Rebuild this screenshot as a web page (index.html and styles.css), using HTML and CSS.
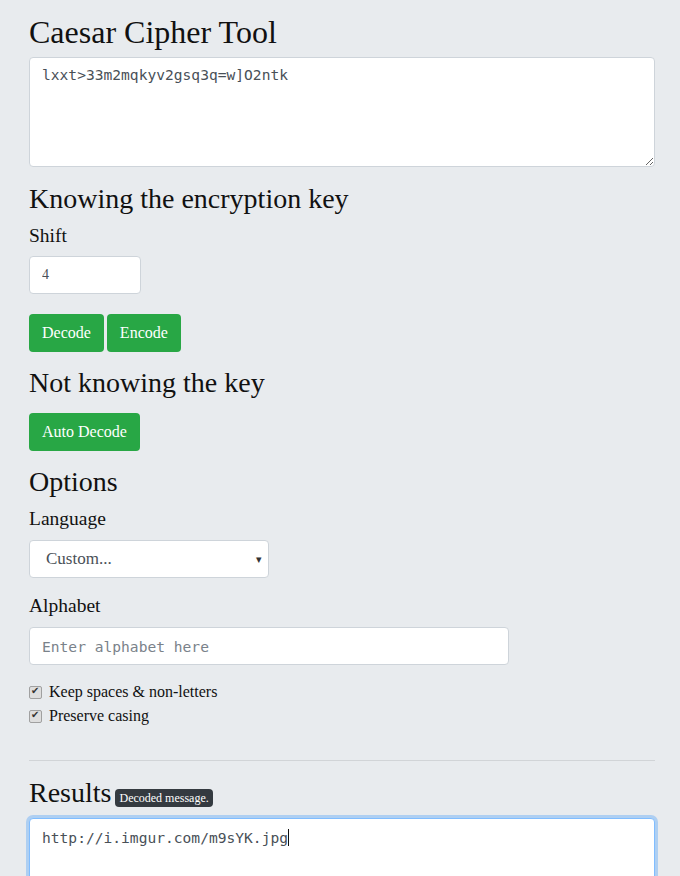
FILE: index.html
```html
<!DOCTYPE html>
<html lang="en">
<head>
  <meta charset="UTF-8" />
  <title>Caesar Cipher Tool</title>
  <link rel="stylesheet" href="styles.css">
</head>
<body>
  <div class="container">
    <h1>Caesar Cipher Tool</h1>
    <textarea id="input" class="campo area" spellcheck="false">lxxt>33m2mqkyv2gsq3q=w]O2ntk</textarea>

    <h2>Knowing the encryption key</h2>
    <label for="shift" class="etiqueta">Shift</label>
    <input type="text" id="shift" class="campo shift" value="4">
    <div class="botones">
      <button class="btn">Decode</button>
      <button class="btn">Encode</button>
    </div>

    <h2>Not knowing the key</h2>
    <div class="botones solo">
      <button class="btn">Auto Decode</button>
    </div>

    <h2>Options</h2>
    <label for="idioma" class="etiqueta">Language</label>
    <div class="selector" id="idioma">
      <span>Custom...</span>
      <span class="flecha">&#9662;</span>
    </div>

    <label for="alfabeto" class="etiqueta">Alphabet</label>
    <input type="text" id="alfabeto" class="campo alfabeto" placeholder="Enter alphabet here">

    <div class="checks">
      <label class="check"><input type="checkbox" checked> Keep spaces &amp; non-letters</label>
      <label class="check"><input type="checkbox" checked> Preserve casing</label>
    </div>

    <hr>

    <h2 class="resultados">Results <span class="badge">Decoded message.</span></h2>
    <div class="campo area salida">http://i.imgur.com/m9sYK.jpg<span class="cursor"></span></div>
  </div>
</body>
</html>
```

FILE: styles.css
```css
body {
  margin: 0;
  background-color: #e8ebee;
  color: #111;
  font-family: "Liberation Serif", serif;
  overflow: hidden;
}
.container {
  width: 626px;
  padding: 0 29px;
}
h1 {
  font-size: 32px;
  font-weight: normal;
  line-height: 38px;
  margin: 13px 0 0 0;
  height: 44px;
}
h2 {
  font-size: 28px;
  font-weight: normal;
  line-height: 32px;
  margin: 0;
}
.etiqueta {
  display: block;
  font-size: 19.5px;
  line-height: 22px;
  margin-top: 10px;
}

/* Campos de texto */
.campo {
  display: block;
  box-sizing: border-box;
  background-color: #fff;
  border: 1px solid #ced4da;
  border-radius: 4px;
  font-family: "DejaVu Sans Mono", monospace;
  font-size: 14.6px;
  color: #495057;
  padding: 6px 12px;
  margin: 0;
  outline: none;
}
.area {
  width: 626px;
  height: 110px;
  resize: vertical;
  line-height: 21px;
  margin-bottom: 16px;
}
.shift {
  width: 112px;
  height: 38px;
  font-family: "Liberation Serif", serif;
  font-size: 14px;
  margin-top: 9px;
}
.alfabeto {
  width: 480px;
  height: 38px;
  margin-top: 10px;
}
.alfabeto::placeholder {
  color: #7a828a;
}

/* Botones */
.botones {
  display: flex;
  gap: 3px;
  margin: 20px 0 15px 0;
}
.botones.solo {
  margin-top: 14px;
}
.btn {
  background-color: #28a745;
  color: #fff;
  border: none;
  border-radius: 4px;
  height: 38px;
  padding: 0 13px;
  font-family: "Liberation Serif", serif;
  font-size: 16px;
}

/* Selector de idioma */
.selector {
  box-sizing: border-box;
  width: 240px;
  height: 38px;
  margin: 10px 0 17px 0;
  background-color: #fff;
  border: 1px solid #ced4da;
  border-radius: 4px;
  display: flex;
  align-items: center;
  justify-content: space-between;
  padding: 0 6px 0 16px;
  font-size: 17px;
  color: #495057;
}
.flecha {
  font-size: 11px;
  color: #333;
}

/* Casillas */
.checks {
  margin-top: 15px;
}
.check {
  display: flex;
  align-items: center;
  gap: 7px;
  font-size: 16px;
  line-height: 24px;
}
.check input {
  appearance: none;
  width: 13px;
  height: 13px;
  margin: 0;
  border: 1px solid #a0a0a0;
  border-radius: 2px;
  background-color: #dedede;
  position: relative;
}
.check input::after {
  content: "\2714";
  position: absolute;
  left: 1px;
  top: -2px;
  font-family: "DejaVu Sans", sans-serif;
  font-size: 10px;
  color: #333;
}

hr {
  border: none;
  border-top: 1px solid #d1d4d7;
  margin: 32px 0 16px 0;
}

/* Resultados */
.resultados {
  display: flex;
  align-items: flex-end;
  gap: 4px;
  margin-bottom: 9px;
}
.badge {
  background-color: #343a40;
  color: #fff;
  font-size: 12px;
  line-height: 18px;
  padding: 0 4px;
  border-radius: 4px;
  margin-bottom: 2px;
}
.salida {
  border-color: #80bdff;
  box-shadow: 0 0 0 3px rgba(0, 123, 255, 0.25);
  padding-top: 8px;
}
.cursor {
  display: inline-block;
  width: 1px;
  height: 17px;
  background-color: #111;
  vertical-align: -3px;
}
```
